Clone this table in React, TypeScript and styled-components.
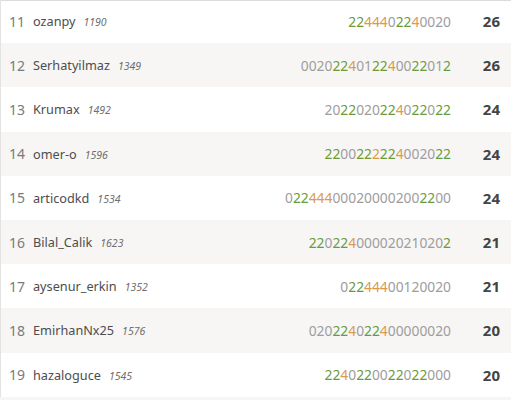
import React from 'react';
import styled, { createGlobalStyle } from 'styled-components';

const GlobalStyle = createGlobalStyle`
  html, body {
    margin: 0;
    padding: 0;
    background: #f7f6f5;
    font-family: "Noto Sans", "Open Sans", sans-serif;
  }
`;

const Standings = styled.div`
  width: 511px;
  border-left: 1px solid #e3e3e3;
  box-sizing: border-box;
  margin-top: -1px;
`;

const Row = styled.div<{ $striped: boolean }>`
  display: grid;
  grid-template-columns: 24px 1fr auto 60px;
  align-items: center;
  height: 44.2px;
  background: ${({ $striped }) => ($striped ? '#f7f6f5' : '#ffffff')};

  &:first-child {
    box-shadow: inset 0 2px 0 #dcdcdc;
  }
`;

const Rank = styled.span`
  text-align: right;
  font-size: 14px;
  color: #7a7a7a;
`;

const Player = styled.span`
  display: flex;
  align-items: baseline;
  padding-left: 8px;
  white-space: nowrap;
`;

const Name = styled.span`
  font-size: 12.7px;
  color: #4d4d4d;
`;

const Rating = styled.em`
  margin-left: 8px;
  font-size: 10.5px;
  color: #6f6f6f;
`;

const Sheet = styled.span`
  font-size: 13.8px;
  white-space: nowrap;
`;

const Score = styled.span<{ $kind: string }>`
  color: ${({ $kind }) =>
    $kind === 's' ? '#6a9b38' : $kind === 'd' ? '#db9a4c' : '#9d9d9d'};
`;

const Total = styled.strong`
  text-align: right;
  padding-right: 11px;
  font-size: 15px;
  font-weight: 700;
  color: #444;
`;

// g = plain, s = streak, d = double (on fire)
const players = [
  { rank: 11, name: 'ozanpy', rating: 1190, sheet: '2244402240020', kinds: 'ssdddgssdgggg', total: 26 },
  { rank: 12, name: 'Serhatyilmaz', rating: 1349, sheet: '0020224012240022012', kinds: 'ggggssdggssdggssggs', total: 26 },
  { rank: 13, name: 'Krumax', rating: 1492, sheet: '2022020224022022', kinds: 'ggssgggssdgssgss', total: 24 },
  { rank: 14, name: 'omer-o', rating: 1596, sheet: '2200222224002022', kinds: 'ssggssdssdggggss', total: 24 },
  { rank: 15, name: 'articodkd', rating: 1534, sheet: '022444000200002002200', kinds: 'gssddd' + 'ggggggggggg' + 'ssgg', total: 24 },
  { rank: 16, name: 'Bilal_Calik', rating: 1623, sheet: '220224000020210202', kinds: 'ssgssd' + 'ggggggggggg' + 's', total: 21 },
  { rank: 17, name: 'aysenur_erkin', rating: 1352, sheet: '02244400120020', kinds: 'gssddd' + 'gggggggg', total: 21 },
  { rank: 18, name: 'EmirhanNx25', rating: 1576, sheet: '020224022400000020', kinds: 'gggssdgssd' + 'gggggggg', total: 20 },
  { rank: 19, name: 'hazaloguce', rating: 1545, sheet: '2240220022022000', kinds: 'ssdgssggssgssggg', total: 20 },
];

const App: React.FC = () => {
  return (
    <>
      <GlobalStyle />
      <Standings>
        {players.map((p, i) => (
          <Row key={p.rank} $striped={i % 2 === 1}>
            <Rank>{p.rank}</Rank>
            <Player>
              <Name>{p.name}</Name>
              <Rating>{p.rating}</Rating>
            </Player>
            <Sheet>
              {p.sheet.split('').map((digit, j) => (
                <Score key={j} $kind={p.kinds[j]}>
                  {digit}
                </Score>
              ))}
            </Sheet>
            <Total>{p.total}</Total>
          </Row>
        ))}
      </Standings>
    </>
  );
};

export default App;
